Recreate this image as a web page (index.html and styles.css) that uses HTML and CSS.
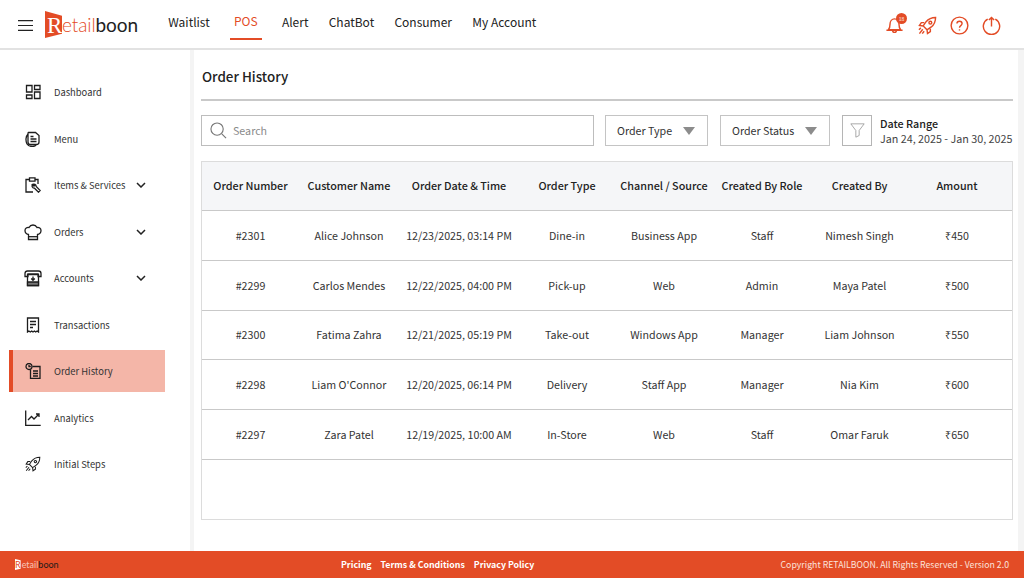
FILE: index.html
```html
<!DOCTYPE html>
<html lang="en">
<head>
<meta charset="utf-8">
<title>Order History</title>
<link rel="stylesheet" href="styles.css">
</head>
<body>
<header class="topbar">
  <svg class="burger" viewBox="0 0 15 11"><path d="M0 .6h15M0 5.500h15M0 10.400h15"/></svg>
  <div class="logo">
    <span class="flag"></span><span class="flag-r">R</span><span class="logo-a">etail</span><span class="logo-b">boon</span>
  </div>
  <nav class="topnav">
    <a class="tab">Waitlist</a>
    <a class="tab tab-on">POS</a>
    <a class="tab">Alert</a>
    <a class="tab">ChatBot</a>
    <a class="tab">Consumer</a>
    <a class="tab">My Account</a>
  </nav>
  <div class="actions">
    <span class="bell">
      <svg class="act" viewBox="0 0 20 20"><path d="M3.500 14.500c1.500-1.500 1.800-3 1.800-6 0-3 2-5.500 4.700-5.500s4.700 2.500 4.700 5.500c0 3 .3 4.500 1.800 6zM8 15c0 3 4 3 4 0M1.500 15h17"/></svg>
      <span class="badge">18</span>
    </span>
    <svg class="act" viewBox="0 0 20 20"><path d="M18.500 1.500c-4 0-7.500 1.500-10 4.500l-3 4.500 4 4 4.500-3c3-2.500 4.500-6 4.500-10zM6.500 7H3.500L1.500 10l4 .5M13 13.500v3L10 18.500l-.5-4M5 14l-3.500 4.500M6.500 16l-2 2.500M3 12.500l-2 2"/><circle cx="13" cy="7" r="1.500"/></svg>
    <svg class="act" viewBox="0 0 20 20"><circle cx="10" cy="10" r="8.800"/><path d="M7.300 8c0-3.400 5.400-3.400 5.400 0 0 2.200-2.700 2-2.700 4.300"/><path d="M10 14v1.300"/></svg>
    <svg class="act" viewBox="0 0 20 20"><path d="M6 3.300a8.600 8.600 0 1 0 8 0M10 11V1.500M7.200 4.300L10 1.500l2.800 2.800"/></svg>
  </div>
</header>

<div class="shell">
  <aside class="sidebar">
    <a class="item"><svg class="ico" viewBox="0 0 16 16"><path d="M1.500 1.500h5.500v6.500H1.500zM9.500 1.500h5.500v4H9.500zM1.500 11h5.500v3.500H1.500zM9.500 8h5.500v6.500H9.500z"/></svg><span class="label">Dashboard</span></a>
    <a class="item"><svg class="ico" viewBox="0 0 16 16"><path d="M3.500 1.500h7l3.500 3v6.500a2.500 2.500 0 0 1-2.500 2.500h-6A2.500 2.500 0 0 1 3 11V2zM3 3C.5 5.500.5 10 2 13c1 1.500 3 2.500 5.500 2.500s3-.5 4-2M5.500 5.500h3M5.500 8h6M5.500 10.500h6"/></svg><span class="label">Menu</span></a>
    <a class="item"><svg class="ico" viewBox="0 0 16 16"><path d="M4 2.500H1v12.500h7M10.500 2.500H13V7M4.500 .8h5.500v3.400H4.500zM7.500 7.500c1.500-1 3.700 0 3.700 2l4 4-1.700 1.700-4-4c-2 0-3-2-2-3.500l1.500 1.500 1-1z"/></svg><span class="label">Items &amp; Services</span><svg class="chev" viewBox="0 0 10 6"><path d="M1 1l4 4 4-4"/></svg></a>
    <a class="item"><svg class="ico ico-lg" viewBox="0 0 18 18"><path d="M4.500 11.500C2 11 1 9.500 1 7.500c0-2 2-3.500 4-3C6 2.500 7.500 2 9 2s3 .5 4 2.500c2-.5 4 1 4 3 0 2-1 3.500-3.500 4V16.500h-9z"/><path d="M4.500 13.700h9"/></svg><span class="label">Orders</span><svg class="chev" viewBox="0 0 10 6"><path d="M1 1l4 4 4-4"/></svg></a>
    <a class="item"><svg class="ico ico-lg" viewBox="0 0 18 18"><path d="M1 7.500V4.500C1 2.500 2 2 3.500 2h11C16 2 17 2.500 17 4.500v3h-3V5H4v2.500zM3.500 5.500h11v11h-11zM9 7.500v3.500M7.200 9.500L9 11.300l1.800-1.800"/><path class="band" d="M3.500 13h11v3.500h-11z"/></svg><span class="label">Accounts</span><svg class="chev" viewBox="0 0 10 6"><path d="M1 1l4 4 4-4"/></svg></a>
    <a class="item"><svg class="ico" viewBox="0 0 16 16"><path d="M2.500 1h11v14l-1.400-1-1.400 1-1.300-1-1.400 1-1.300-1-1.400 1-1.400-1-1.400 1zM5 4.500h6M5 7.500h6M5 10.500h3"/></svg><span class="label">Transactions</span></a>
    <a class="item item-on"><svg class="ico" viewBox="0 0 16 16"><circle cx="4" cy="3.500" r="3"/><path d="M4 2v1.500h1.800M7.500 3.500h7.500v12H5.500V7M8 8h5M8 10.500h5M8 13h5"/></svg><span class="label">Order History</span></a>
    <a class="item"><svg class="ico" viewBox="0 0 16 16"><path d="M.7 .5v15h15M3 10l3.500-3.500L9 9l5-5M11 4h3v3"/></svg><span class="label">Analytics</span></a>
    <a class="item"><svg class="ico" viewBox="0 0 20 20"><path d="M18.500 1.500c-4 0-7.500 1.500-10 4.500l-3 4.500 4 4 4.500-3c3-2.500 4.500-6 4.500-10zM6.500 7H3.500L1.500 10l4 .5M13 13.500v3L10 18.500l-.5-4M5 14l-3.500 4.500M6.500 16l-2 2.500M3 12.500l-2 2"/><circle cx="13" cy="7" r="1.500"/></svg><span class="label">Initial Steps</span></a>
  </aside>

  <main class="main">
    <h1 class="title">Order History</h1>
    <div class="toolbar">
      <label class="search">
        <svg class="search-ico" viewBox="0 0 18 18"><circle cx="7.500" cy="7.500" r="6.500"/><path d="M12.500 12.500L17 17"/></svg>
        <span class="placeholder">Search</span>
      </label>
      <div class="select sel-type"><span>Order Type</span><i class="caret"></i></div>
      <div class="select sel-status"><span>Order Status</span><i class="caret"></i></div>
      <div class="filter"><svg viewBox="0 0 18 20"><path d="M1 2h16l-6 8v6l-4 2v-8z"/></svg></div>
      <div class="dates">
        <strong class="dates-t">Date Range</strong>
        <span class="dates-v">Jan 24, 2025 - Jan 30, 2025</span>
      </div>
    </div>

    <section class="grid">
      <div class="row head"><span>Order Number</span><span>Customer Name</span><span>Order Date &amp; Time</span><span>Order Type</span><span>Channel / Source</span><span>Created By Role</span><span>Created By</span><span>Amount</span></div>
      <div class="row"><span>#2301</span><span>Alice Johnson</span><span>12/23/2025, 03:14 PM</span><span>Dine-in</span><span>Business App</span><span>Staff</span><span>Nimesh Singh</span><span>₹450</span></div>
      <div class="row"><span>#2299</span><span>Carlos Mendes</span><span>12/22/2025, 04:00 PM</span><span>Pick-up</span><span>Web</span><span>Admin</span><span>Maya Patel</span><span>₹500</span></div>
      <div class="row"><span>#2300</span><span>Fatima Zahra</span><span>12/21/2025, 05:19 PM</span><span>Take-out</span><span>Windows App</span><span>Manager</span><span>Liam Johnson</span><span>₹550</span></div>
      <div class="row"><span>#2298</span><span>Liam O'Connor</span><span>12/20/2025, 06:14 PM</span><span>Delivery</span><span>Staff App</span><span>Manager</span><span>Nia Kim</span><span>₹600</span></div>
      <div class="row"><span>#2297</span><span>Zara Patel</span><span>12/19/2025, 10:00 AM</span><span>In-Store</span><span>Web</span><span>Staff</span><span>Omar Faruk</span><span>₹650</span></div>
    </section>
  </main>
</div>

<footer class="footer">
  <div class="mini"><span class="mini-flag"><span class="mini-r">R</span></span><span class="mini-a">etail</span><span class="mini-b">boon</span></div>
  <div class="links"><a>Pricing</a><a>Terms &amp; Conditions</a><a>Privacy Policy</a></div>
  <div class="copy">Copyright RETAILBOON. All Rights Reserved - Version 2.0</div>
</footer>
</body>
</html>
```

FILE: styles.css
```css
* { box-sizing: border-box; }
html, body { height: 100%; }
body {
  margin: 0;
  width: 1024px;
  height: 578px;
  overflow: hidden;
  display: flex;
  flex-direction: column;
  background: #f4f4f4;
  color: #26282b;
  font-family: "Noto Sans CJK JP", "Noto Sans", sans-serif;
}
.topbar {
  height: 50px;
  flex: none;
  display: flex;
  align-items: center;
  background: #fff;
  border-bottom: 2px solid #e2e2e2;
  padding: 0 23px 0 18px;
}
.burger { width: 15px; height: 11px; fill: none; stroke: #222; stroke-width: 1.200; flex: none; margin-top: 2px; }
.logo { position: relative; display: flex; align-items: flex-end; margin-left: 12px; width: 95px; height: 27px; margin-top: 1px; font-family: "Lato", sans-serif; font-size: 19px; line-height: 22px; letter-spacing: -.1px; flex: none; }
.flag {
  width: 17px; height: 27px; background: #e34c26; flex: none;
  clip-path: polygon(0 0, 100% 18%, 100% 84%, 0 100%);
}
.flag-r { position: absolute; left: 2px; top: 3px; color: #fff; font-size: 23px; font-family: "Liberation Serif", serif; line-height: 23px; }
.logo-a { color: #e34c26; font-weight: 300; padding-bottom: 2px; }
.logo-b { color: #222; padding-bottom: 2px; }
.topnav { display: flex; gap: 20.250px; margin-left: 28.250px; font-size: 12px; height: 40px; align-self: flex-start; }
.tab { display: flex; align-items: center; height: 40px; padding-top: 2px; color: #222; }
.tab-on { color: #e34c26; padding: 2px 4px 0; border-bottom: 2px solid #e34c26; }
.actions { margin-left: auto; margin-top: 2px; display: flex; align-items: center; gap: 13px; }
.act { width: 19px; height: 19px; fill: none; stroke: #e34c26; stroke-width: 1.500; display: block; }
.bell { position: relative; display: block; margin-right: 1px; }
.badge {
  position: absolute; top: -3px; right: -3px; width: 11px; height: 11px; border-radius: 50%;
  background: #e34c26; color: #fff; font-size: 5px; line-height: 11px; text-align: center;
}
.shell { flex: 1; display: flex; min-height: 0; }
.sidebar {
  width: 190px; flex: none; background: #fff; padding: 21px 25px 0 9px;
  display: flex; flex-direction: column; gap: 4.500px;
}
.item { display: flex; align-items: center; height: 42px; padding-left: 16px; font-size: 9.400px; color: #333; flex: none; }
.item-on { background: #f4b6a8; border-left: 4px solid #e34c26; padding-left: 12px; }
.ico { width: 16px; height: 16px; flex: none; fill: none; stroke: #1d1d1d; stroke-width: 1.300; }
.ico-lg { width: 18px; height: 18px; margin-left: -1px; margin-right: -1px; }
.band { fill: #777; }
.label { margin-left: 13px; }
.chev { width: 10px; height: 6px; margin-left: auto; margin-right: 19px; fill: none; stroke: #222; stroke-width: 1.500; }
.main {
  width: 824px; flex: none; margin-left: 4px; background: #fff;
  padding: 18px 5px 0 7px; display: flex; flex-direction: column;
}
.title {
  margin: 0; height: 33px; font-size: 13.400px; font-weight: 500; line-height: 17px; color: #222; padding-left: 1px;
  border-bottom: 2px solid #c9c9c9;
}
.toolbar { display: flex; align-items: center; margin-top: 14px; height: 31px; }
.search {
  width: 393px; height: 31px; flex: none; border: 1px solid #bdbdbd; display: flex; align-items: center; padding-left: 8px;
}
.search-ico { width: 17px; height: 17px; fill: none; stroke: #777; stroke-width: 1.200; flex: none; }
.placeholder { margin-left: 6px; font-size: 10.700px; color: #8a8a8a; }
.select {
  height: 31px; flex: none; border: 1px solid #c4c4c4; display: flex; align-items: center; font-size: 10.700px; color: #333;
  padding-left: 11px;
}
.sel-type { width: 103px; margin-left: 11px; }
.sel-status { width: 110px; margin-left: 12px; }
.caret { width: 0; height: 0; border-left: 6.500px solid transparent; border-right: 6.500px solid transparent; border-top: 8px solid #8c8c8c; margin-left: 11px; }
.filter { width: 30px; height: 31px; flex: none; margin-left: 12px; border: 1px solid #b5b5b5; display: flex; align-items: center; justify-content: center; }
.filter svg { width: 15px; height: 17px; fill: none; stroke: #999; stroke-width: 1; }
.dates { margin-left: 8px; display: flex; flex-direction: column; white-space: nowrap; line-height: 15px; }
.dates-t { font-size: 10.750px; font-weight: 500; color: #222; }
.dates-v { font-size: 10.750px; color: #444; }
.grid { margin-top: 15px; height: 359px; border: 1px solid #dcdcdc; }
.row {
  display: grid; grid-template-columns: 97px 100px 120px 96px 98px 98px 97px 98px;
  height: 49.750px; align-items: center; border-bottom: 1px solid #c9c9c9; font-size: 10.700px; color: #333; text-align: center;
}
.row span { white-space: nowrap; }
.head { background: #f5f6f8; height: 49px; font-size: 10.800px; font-weight: 500; color: #222; padding-bottom: 3px; }
.footer {
  height: 27px; flex: none; background: #e34c26; color: #fff; display: flex; align-items: center;
  padding: 0 15px; font-size: 8.750px;
}
.mini { display: flex; align-items: center; width: 43px; font-family: "Lato", sans-serif; font-size: 9px; flex: none; }
.mini-flag { width: 6px; height: 11px; background: #fff; display: flex; align-items: center; justify-content: center; clip-path: polygon(0 0, 100% 12%, 100% 88%, 0 100%); }
.mini-r { color: #e34c26; font-size: 9px; line-height: 11px; }
.mini-a { color: #f7c6b8; margin-left: 1px; }
.mini-b { color: #1b1b1b; }
.links { display: flex; gap: 9px; margin-left: 283px; font-weight: 700; font-size: 8.800px; }
.copy { margin-left: auto; color: #fbe3dc; }
```
